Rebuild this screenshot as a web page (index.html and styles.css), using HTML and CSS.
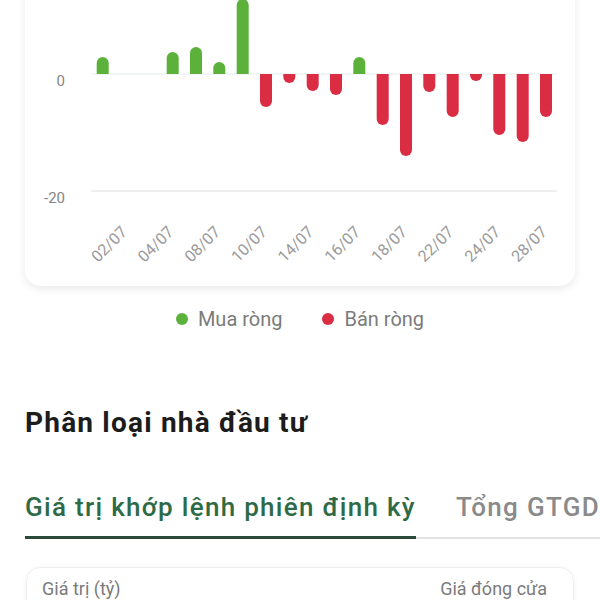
FILE: index.html
```html
<!DOCTYPE html>
<html lang="vi">
<head>
    <meta charset="UTF-8">
    <meta name="viewport" content="width=device-width, initial-scale=1.0">
    <title>Phân loại nhà đầu tư</title>
    <link rel="stylesheet" href="styles.css">
</head>
<body>
    <div class="chart-card">
        <svg class="chart" width="550" height="302" viewBox="0 0 550 302">
            <line class="grid-zero" x1="66" y1="90" x2="532" y2="90"/>
            <line class="grid" x1="66" y1="207" x2="532" y2="207"/>
            <text class="y-label" x="40" y="102">0</text>
            <text class="y-label" x="40" y="219">-20</text>

            <g class="bar-buy">
                <path d="M71.7 90 V79 A6 6 0 0 1 83.7 79 V90 Z"/>
                <path d="M141.7 90 V74 A6 6 0 0 1 153.7 74 V90 Z"/>
                <path d="M165 90 V69 A6 6 0 0 1 177 69 V90 Z"/>
                <path d="M188.3 90 V84 A6 6 0 0 1 200.3 84 V90 Z"/>
                <path d="M211.7 90 V21 A6 6 0 0 1 223.7 21 V90 Z"/>
                <path d="M328.3 90 V79 A6 6 0 0 1 340.3 79 V90 Z"/>
            </g>
            <g class="bar-sell">
                <path d="M235 90 V117 A6 6 0 0 0 247 117 V90 Z"/>
                <path d="M258.3 90 V93 A6 6 0 0 0 270.3 93 V90 Z"/>
                <path d="M281.7 90 V101 A6 6 0 0 0 293.7 101 V90 Z"/>
                <path d="M305 90 V105 A6 6 0 0 0 317 105 V90 Z"/>
                <path d="M351.7 90 V135 A6 6 0 0 0 363.7 135 V90 Z"/>
                <path d="M375 90 V166 A6 6 0 0 0 387 166 V90 Z"/>
                <path d="M398.3 90 V102 A6 6 0 0 0 410.3 102 V90 Z"/>
                <path d="M421.7 90 V127 A6 6 0 0 0 433.7 127 V90 Z"/>
                <path d="M445 90 V91 A6 6 0 0 0 457 91 V90 Z"/>
                <path d="M468.3 90 V145 A6 6 0 0 0 480.3 145 V90 Z"/>
                <path d="M491.7 90 V152 A6 6 0 0 0 503.7 152 V90 Z"/>
                <path d="M515 90 V127 A6 6 0 0 0 527 127 V90 Z"/>
            </g>

            <g class="x-labels">
                <text transform="translate(103 249) rotate(-45)">02/07</text>
                <text transform="translate(149.7 249) rotate(-45)">04/07</text>
                <text transform="translate(196.3 249) rotate(-45)">08/07</text>
                <text transform="translate(243 249) rotate(-45)">10/07</text>
                <text transform="translate(289.7 249) rotate(-45)">14/07</text>
                <text transform="translate(336.3 249) rotate(-45)">16/07</text>
                <text transform="translate(383 249) rotate(-45)">18/07</text>
                <text transform="translate(429.7 249) rotate(-45)">22/07</text>
                <text transform="translate(476.3 249) rotate(-45)">24/07</text>
                <text transform="translate(523 249) rotate(-45)">28/07</text>
            </g>
        </svg>
    </div>

    <div class="legend">
        <div class="legend-item"><span class="dot dot-buy"></span>Mua ròng</div>
        <div class="legend-item"><span class="dot dot-sell"></span>Bán ròng</div>
    </div>

    <h2 class="section-title">Phân loại nhà đầu tư</h2>

    <div class="tabs">
        <div class="tab active">Giá trị khớp lệnh phiên định kỳ</div>
        <div class="tab">Tổng GTGD</div>
    </div>

    <div class="table-card">
        <div class="table-head">
            <span>Giá trị (tỷ)</span>
            <span>Giá đóng cửa</span>
        </div>
    </div>
</body>
</html>
```

FILE: styles.css
```css
:root {
    --primary-font: Roboto, "Noto Sans", "Liberation Sans", sans-serif;
    --text-color: #1c1c1c;
    --muted: #7b7b7b;
    --green: #5cb13b;
    --red: #da2d44;
    --tab-green: #2f6a47;
}

* {
    margin: 0;
    padding: 0;
    box-sizing: border-box;
}

body {
    font-family: var(--primary-font);
    color: var(--text-color);
    background-color: white;
    width: 600px;
    height: 600px;
    overflow: hidden;
}

.chart-card {
    margin: -16px 25px 0;
    height: 302px;
    background-color: white;
    border-radius: 16px;
    box-shadow: 0 3px 10px rgba(0, 0, 0, 0.09);
}

.chart {
    display: block;
}

.grid-zero {
    stroke: #e3ecee;
    stroke-width: 1;
}

.grid {
    stroke: #dcdcdc;
    stroke-width: 1;
}

.y-label {
    font-size: 15px;
    fill: #858585;
    text-anchor: end;
}

.bar-buy {
    fill: var(--green);
}

.bar-sell {
    fill: var(--red);
}

.x-labels text {
    font-size: 16px;
    fill: #9a9a9a;
    text-anchor: end;
}

.legend {
    display: flex;
    justify-content: center;
    gap: 40px;
    margin-top: 21px;
    font-size: 20px;
    line-height: 24px;
    color: var(--muted);
}

.legend-item {
    display: flex;
    align-items: center;
    gap: 10px;
}

.dot {
    width: 12px;
    height: 12px;
    border-radius: 50%;
}

.dot-buy {
    background-color: var(--green);
}

.dot-sell {
    background-color: var(--red);
}

.section-title {
    margin: 75px 25px 0;
    font-size: 28px;
    line-height: 34px;
    font-weight: 700;
    letter-spacing: 1.2px;
}

.tabs {
    display: flex;
    gap: 40px;
    margin: 52px 0 0 25px;
    border-bottom: 2px solid #e2e2e2;
    white-space: nowrap;
}

.tab {
    font-size: 26px;
    line-height: 30px;
    font-weight: 500;
    letter-spacing: 1.3px;
    color: #8a8a8a;
    padding-bottom: 14px;
    margin-bottom: -2px;
}

.tab.active {
    color: var(--tab-green);
    border-bottom: 3px solid #2c4a39;
}

.table-card {
    margin: 28px 26px 0;
    height: 80px;
    border: 1px solid #efefef;
    border-radius: 14px;
    box-shadow: 0 1px 6px rgba(0, 0, 0, 0.05);
    padding: 9px 26px 0 15px;
}

.table-head {
    display: flex;
    justify-content: space-between;
    font-size: 18px;
    line-height: 24px;
    color: var(--muted);
}
```
